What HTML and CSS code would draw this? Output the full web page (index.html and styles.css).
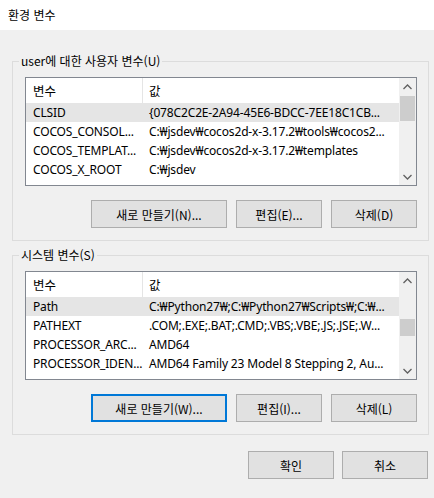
FILE: index.html
```html
<!DOCTYPE html>
<html lang="ko">
<head>
<meta charset="utf-8">
<title>환경 변수</title>
<link rel="stylesheet" href="styles.css">
</head>
<body>
<div class="titlebar">환경 변수</div>
<div class="dialog">
  <fieldset class="group">
    <legend>user에 대한 사용자 변수(U)</legend>
    <div class="list">
      <div class="list-main">
        <div class="row head"><div class="c1">변수</div><div class="c2">값</div></div>
        <div class="row sel"><div class="c1">CLSID</div><div class="c2">{078C2C2E-2A94-45E6-BDCC-7EE18C1CB...</div></div>
        <div class="row"><div class="c1">COCOS_CONSOL...</div><div class="c2">C:₩jsdev₩cocos2d-x-3.17.2₩tools₩cocos2...</div></div>
        <div class="row"><div class="c1">COCOS_TEMPLAT...</div><div class="c2">C:₩jsdev₩cocos2d-x-3.17.2₩templates</div></div>
        <div class="row"><div class="c1">COCOS_X_ROOT</div><div class="c2">C:₩jsdev</div></div>
      </div>
      <div class="scrollbar">
        <div class="arrow"><svg width="9" height="6" viewBox="0 0 9 6"><path d="M0.5 5 L4.5 1 L8.5 5" fill="none" stroke="#606060" stroke-width="1.3"/></svg></div>
        <div class="track"><div class="thumb thumb-user"></div></div>
        <div class="arrow"><svg width="9" height="6" viewBox="0 0 9 6"><path d="M0.5 1 L4.5 5 L8.5 1" fill="none" stroke="#606060" stroke-width="1.3"/></svg></div>
      </div>
    </div>
    <div class="buttons">
      <button class="btn wide">새로 만들기(N)...</button>
      <button class="btn">편집(E)...</button>
      <button class="btn">삭제(D)</button>
    </div>
  </fieldset>

  <fieldset class="group second">
    <legend>시스템 변수(S)</legend>
    <div class="list">
      <div class="list-main">
        <div class="row head"><div class="c1">변수</div><div class="c2">값</div></div>
        <div class="row sel"><div class="c1">Path</div><div class="c2">C:₩Python27₩;C:₩Python27₩Scripts₩;C:₩...</div></div>
        <div class="row"><div class="c1">PATHEXT</div><div class="c2">.COM;.EXE;.BAT;.CMD;.VBS;.VBE;.JS;.JSE;.W...</div></div>
        <div class="row"><div class="c1">PROCESSOR_ARC...</div><div class="c2">AMD64</div></div>
        <div class="row"><div class="c1">PROCESSOR_IDEN...</div><div class="c2">AMD64 Family 23 Model 8 Stepping 2, Au...</div></div>
      </div>
      <div class="scrollbar">
        <div class="arrow"><svg width="9" height="6" viewBox="0 0 9 6"><path d="M0.5 5 L4.5 1 L8.5 5" fill="none" stroke="#606060" stroke-width="1.3"/></svg></div>
        <div class="track"><div class="thumb thumb-sys"></div></div>
        <div class="arrow"><svg width="9" height="6" viewBox="0 0 9 6"><path d="M0.5 1 L4.5 5 L8.5 1" fill="none" stroke="#606060" stroke-width="1.3"/></svg></div>
      </div>
    </div>
    <div class="buttons">
      <button class="btn wide default">새로 만들기(W)...</button>
      <button class="btn">편집(I)...</button>
      <button class="btn">삭제(L)</button>
    </div>
  </fieldset>

  <div class="footer">
    <button class="btn">확인</button>
    <button class="btn">취소</button>
  </div>
</div>
</body>
</html>
```

FILE: styles.css
```css
* { box-sizing: border-box; }
html, body {
  margin: 0;
  padding: 0;
  background: #f0f0f0;
  width: 434px;
  height: 498px;
  overflow: hidden;
  font-family: "Noto Sans", "Noto Sans CJK KR", sans-serif;
  font-size: 12px;
  color: #000;
}
.titlebar {
  height: 30px;
  background: #fff;
  padding-left: 8px;
  line-height: 30px;
  font-family: "Noto Sans CJK KR", sans-serif;
  font-size: 12px;
}
.dialog {
  padding: 23px 0 0 12px;
}
.group {
  width: 417px;
  margin: 0;
  border: 1px solid #dcdcdc;
  padding: 8px 11px 12px 12px;
  min-width: 0;
}
.group.second {
  margin-top: 6px;
}
.group legend {
  padding: 0 2px;
  margin-left: -6px;
  line-height: 16px;
  height: 16px;
  font-family: "Noto Sans CJK KR", sans-serif;
  font-size: 12px;
}
.list {
  display: flex;
  height: 109px;
  border: 1px solid #828790;
  background: #fff;
}
.list-main {
  flex: 1;
  min-width: 0;
}
.row {
  display: flex;
  height: 19px;
  line-height: 19px;
  white-space: nowrap;
  letter-spacing: -0.15px;
}
.row.head {
  height: 25px;
  line-height: 25px;
  letter-spacing: 0;
  font-family: "Noto Sans CJK KR", sans-serif;
  font-size: 12.5px;
}
.row.sel {
  background: #e5e5e5;
}
.c1 {
  width: 117px;
  flex: none;
  padding-left: 7px;
  overflow: hidden;
}
.c2 {
  flex: 1;
  min-width: 0;
  padding-left: 6px;
  overflow: hidden;
}
.row.head .c1 {
  border-right: 1px solid #e5e5e5;
}
.scrollbar {
  width: 17px;
  flex: none;
  display: flex;
  flex-direction: column;
  background: #f0f0f0;
}
.arrow {
  height: 17px;
  display: flex;
  align-items: center;
  justify-content: center;
}
.track {
  flex: 1;
}
.thumb {
  width: 15px;
  margin-left: 1px;
  background: #cdcdcd;
}
.thumb-user {
  margin-top: 1px;
  height: 25px;
}
.thumb-sys {
  margin-top: 30px;
  height: 17px;
}
.buttons {
  display: flex;
  justify-content: flex-end;
  gap: 9px;
  margin-top: 14px;
}
.btn {
  height: 28px;
  width: 86px;
  background: #e1e1e1;
  border: 1px solid #adadad;
  border-radius: 0;
  padding: 0;
  font-family: "Noto Sans CJK KR", sans-serif;
  font-size: 12px;
  color: #000;
}
.btn.wide {
  width: 136px;
}
.btn.default {
  border: 2px solid #0078d7;
}
.footer {
  display: flex;
  justify-content: flex-end;
  gap: 8px;
  width: 416px;
  margin-top: 16px;
}
```
